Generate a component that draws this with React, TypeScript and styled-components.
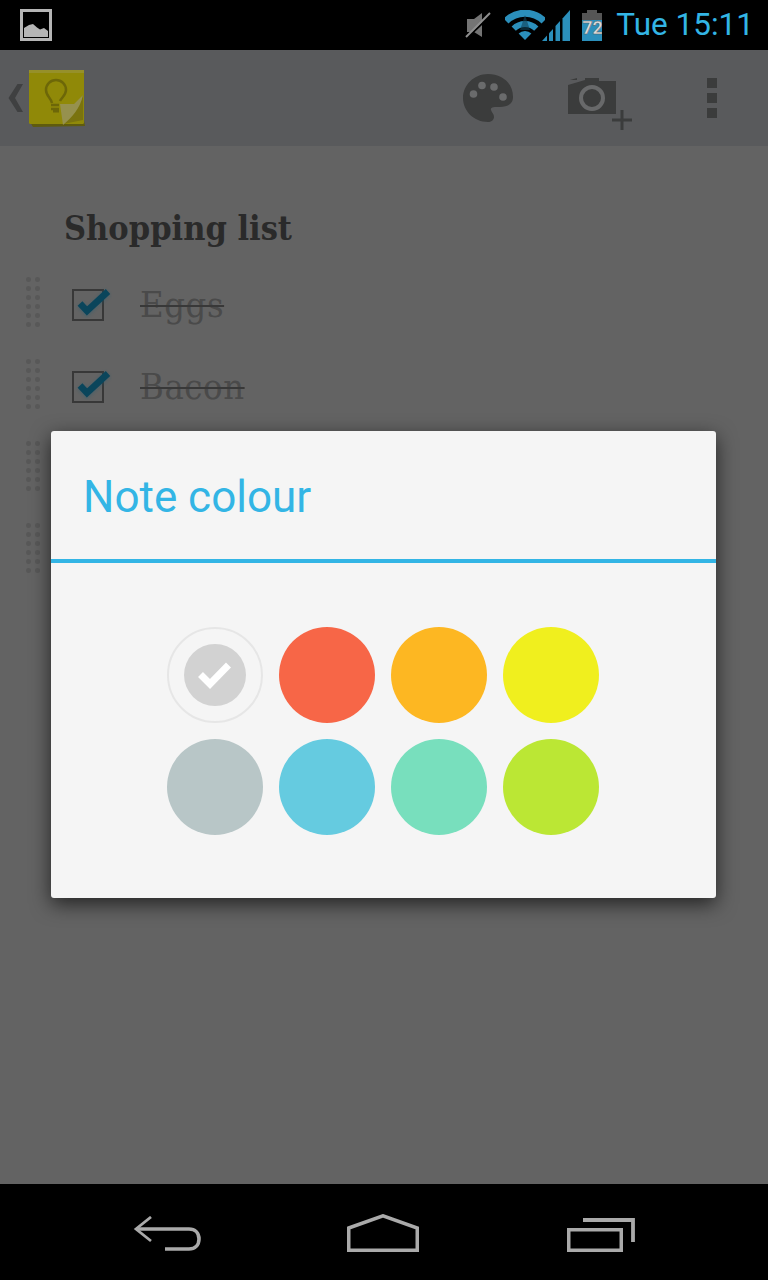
import React from "react";
import styled, { createGlobalStyle } from "styled-components";

const Global = createGlobalStyle`
  html, body { margin: 0; padding: 0; background: #636363; }
  * { box-sizing: border-box; }
`;

const Page = styled.div`
  position: relative;
  width: 768px;
  height: 1280px;
  display: flex;
  flex-direction: column;
  overflow: hidden;
  background: #636363;
  font-family: Roboto, "Liberation Sans", sans-serif;
`;

const StatusBar = styled.header`
  flex: 0 0 50px;
  display: flex;
  align-items: center;
  padding: 0 14px 0 20px;
  background: #000;
`;

const StatusIcons = styled.div`
  margin-left: auto;
  display: flex;
  align-items: center;
`;

const StatusSlot = styled.span<{ $gap: number }>`
  display: flex;
  margin-left: ${(p) => p.$gap}px;
`;

const Clock = styled.span`
  margin-left: 14px;
  font-size: 31.5px;
  line-height: 50px;
  color: #33b5e5;
`;

const ActionBar = styled.div`
  flex: 0 0 96px;
  display: flex;
  align-items: center;
  padding: 0 51px 0 8px;
  background: #595a5c;
`;

const ActionGroup = styled.div`
  margin-left: auto;
  display: flex;
  align-items: center;
`;

const ActionSlot = styled.span<{ $gap?: number }>`
  display: flex;
  margin-left: ${(p) => p.$gap ?? 0}px;
`;

const Content = styled.main`
  flex: 1;
  padding: 60px 0 0 26px;
  background: #636363;
`;

const NoteTitle = styled.h1`
  margin: 0 0 11px 38px;
  font-family: "DejaVu Serif Condensed", "DejaVu Serif", "Liberation Serif", serif;
  font-size: 34px;
  font-weight: 700;
  line-height: 44px;
  color: #2a2a2a;
`;

const Row = styled.div`
  height: 82px;
  display: flex;
  align-items: center;
`;

const Grip = styled.div`
  display: grid;
  grid-template-columns: repeat(2, 5px);
  grid-auto-rows: 5px;
  gap: 4px;
`;

const GripDot = styled.i`
  display: block;
  border-radius: 50%;
  background: #585858;
`;

const CheckSlot = styled.span`
  display: flex;
  margin: 6px 0 0 32px;
`;

const ItemText = styled.span`
  margin: 6px 0 0 28px;
  font-family: "DejaVu Serif Condensed", "DejaVu Serif", "Liberation Serif", serif;
  font-size: 36px;
  line-height: 44px;
  letter-spacing: 0.6px;
  color: #4a4a4a;
  text-decoration: line-through 2px #383838;
`;

const NavBar = styled.nav`
  flex: 0 0 96px;
  display: flex;
  align-items: flex-start;
  padding: 30px 0 0 133px;
  background: #000;
`;

const NavSlot = styled.span<{ $gap?: number; $top?: number }>`
  display: flex;
  margin-left: ${(p) => p.$gap ?? 0}px;
  margin-top: ${(p) => p.$top ?? 0}px;
`;

const Dialog = styled.section`
  position: absolute;
  left: 51px;
  top: 431px;
  width: 665px;
  height: 467px;
  border-radius: 3px;
  background: #f5f5f5;
  box-shadow: 0 6px 20px rgba(0, 0, 0, 0.65);
`;

const DialogTitle = styled.h2`
  margin: 0;
  height: 132px;
  padding: 0 32px;
  border-bottom: 4px solid #33b5e5;
  font-size: 44px;
  font-weight: 400;
  line-height: 132px;
  color: #33b5e5;
`;

const Swatches = styled.div`
  padding: 64px 1px 0 0;
  display: grid;
  grid-template-columns: repeat(4, 96px);
  grid-auto-rows: 96px;
  gap: 16px;
  justify-content: center;
`;

const Swatch = styled.div<{ $color: string }>`
  border-radius: 50%;
  background: ${(p) => p.$color};
`;

const SelectedSwatch = styled.div`
  display: flex;
  align-items: center;
  justify-content: center;
  border: 2px solid #e6e6e6;
  border-radius: 50%;
`;

const SelectedInner = styled.div`
  width: 62px;
  height: 62px;
  display: flex;
  align-items: center;
  justify-content: center;
  border-radius: 50%;
  background: #d2d2d2;
`;

const ImageIcon = () => (
  <svg width="32" height="32" viewBox="0 0 32 32">
    <rect x="1.5" y="1.5" width="29" height="29" fill="none" stroke="#b5b5b5" strokeWidth="3" />
    <path d="M4 28V19L9 16L13 15L17 18.5L20 20.5L24 19L28 22V28Z" fill="#b5b5b5" />
  </svg>
);

const MuteIcon = () => (
  <svg width="26" height="26" viewBox="0 0 26 26">
    <path d="M2 7H9L17 1V25L9 20H2Z" fill="#747474" />
    <path d="M2.5 25.5L26 3" stroke="#000" strokeWidth="2" />
    <path d="M1 25L25 1" stroke="#8f8f8f" strokeWidth="2" />
  </svg>
);

const WifiIcon = () => (
  <svg width="40" height="31" viewBox="0 0 40 31">
    <g fill="none" stroke="#2b8fbb">
      <path d="M1 11A27 27 0 0 1 39 11" strokeWidth="7" />
      <path d="M8.7 18.7A16 16 0 0 1 31.3 18.7" strokeWidth="6" />
    </g>
    <path d="M20 30L13.6 23.6A9 9 0 0 1 26.4 23.6Z" fill="#2b8fbb" />
    <path d="M20 5L25 20H15Z" fill="#0f4358" opacity="0.6" />
  </svg>
);

const SignalIcon = () => (
  <svg width="28" height="31" viewBox="0 0 28 31">
    <path d="M0 31L5 25.5V31Z" fill="#2b8fbb" />
    <path d="M7 23.3L11 18.9V31H7Z" fill="#2b8fbb" />
    <path d="M13.5 16.1L18 11.1V31H13.5Z" fill="#2b8fbb" />
    <path d="M20.5 8.4L28 0V31H20.5Z" fill="#2b8fbb" />
  </svg>
);

const BatteryIcon = () => (
  <svg width="20" height="31" viewBox="0 0 20 31">
    <rect x="5" y="0" width="10" height="3" fill="#555" />
    <rect x="0" y="3" width="20" height="7" fill="#555" />
    <rect x="0" y="10" width="20" height="21" fill="#2b8fbb" />
    <text x="10.5" y="24" textAnchor="middle" fontFamily="Roboto, sans-serif" fontWeight="700" fontSize="18" fill="#dcdcdc" stroke="#555" strokeWidth="0.4">72</text>
  </svg>
);

const Chevron = () => (
  <svg width="15" height="28" viewBox="0 0 15 28" style={{ flexShrink: 0 }}>
    <path d="M9.5 0H15L7 14L15 28H9.5L0.5 14Z" fill="#3f4041" />
  </svg>
);

const NoteIcon = () => (
  <svg width="56" height="57" viewBox="0 0 56 57" style={{ marginLeft: 6 }}>
    <path d="M1 52L55 50L56 56L4 57Z" fill="#5f5b0e" />
    <rect x="0" y="0" width="55" height="54" rx="1.5" fill="#908908" />
    <rect x="0" y="0" width="55" height="3" fill="#96902a" />
    <path d="M54 25V50L34 54Z" fill="#7a730e" />
    <path d="M31 34H45L54 25C51 39 43 47 34 55Z" fill="#96914e" />
    <g fill="none" stroke="#6d6708" strokeWidth="2.5">
      <path d="M23 33C22 28 17 26 17 20A10 10 0 0 1 37 20C37 25 33 27 31 31" />
      <path d="M22 35H30M22 39H30" />
    </g>
    <rect x="24" y="40" width="6" height="2.5" fill="#6d6708" />
  </svg>
);

const PaletteIcon = () => (
  <svg width="50" height="48" viewBox="0 0 50 48">
    <path
      d="M25 0C39 0 50 9 50 23C50 31 43 33 37 33C31 33 27 33 28 36C29 39 31 40 31 43C31 46 28 48 25 48C11 48 0 37 0 24C0 11 11 0 25 0Z"
      fill="#3b3c3c"
    />
    <g fill="#6a6b6c">
      <circle cx="10.5" cy="20" r="3.8" />
      <circle cx="19" cy="11.5" r="3.8" />
      <circle cx="31" cy="13" r="3.8" />
      <circle cx="40" cy="23" r="3.8" />
    </g>
  </svg>
);

const CameraIcon = () => (
  <svg width="64" height="64" viewBox="0 0 64 64">
    <path d="M2 14L9 12V14Z" fill="#3b3c3c" />
    <path d="M0 19L17 14V12H31V15H48V48H0Z" fill="#3b3c3c" />
    <circle cx="24" cy="32" r="11" fill="none" stroke="#68696a" strokeWidth="4" />
    <path d="M44 54H64M54 44V64" stroke="#3b3c3c" strokeWidth="3" fill="none" />
  </svg>
);

const OverflowIcon = () => (
  <svg width="10" height="40" viewBox="0 0 10 40">
    <path d="M0 0H10V10H0ZM0 15H10V25H0ZM0 30H10V40H0Z" fill="#3b3c3c" />
  </svg>
);

const CheckedBox = () => (
  <svg width="40" height="36" viewBox="0 0 40 36">
    <defs>
      <filter id="glow" x="-30%" y="-30%" width="160%" height="160%">
        <feGaussianBlur stdDeviation="1.5" />
      </filter>
    </defs>
    <rect x="1" y="3" width="30" height="30" fill="none" stroke="#383838" strokeWidth="2" />
    <path d="M8 17L15 25L36 5" fill="none" stroke="#1a5c74" strokeWidth="8" opacity="0.3" filter="url(#glow)" />
    <path d="M8 16.5L15 24L36 4.5" fill="none" stroke="#0a455b" strokeWidth="6.5" />
  </svg>
);

const BackIcon = () => (
  <svg width="72" height="36" viewBox="0 0 72 36">
    <path d="M18 1L3 13L18 25" fill="none" stroke="#aaa" strokeWidth="2.8" />
    <path d="M3 13H56C62 13 66 17 66 23C66 29 62 33 56 33H32" fill="none" stroke="#aaa" strokeWidth="3.6" />
  </svg>
);

const HomeIcon = () => (
  <svg width="72" height="40" viewBox="0 0 72 40">
    <path d="M1.75 14L36 1.8L70.25 14V36.25H1.75Z" fill="none" stroke="#aaa" strokeWidth="3.5" />
  </svg>
);

const RecentsIcon = () => (
  <svg width="68" height="36" viewBox="0 0 68 36">
    <rect x="1.75" y="11.75" width="52.5" height="20.5" fill="none" stroke="#aaa" strokeWidth="3.5" />
    <path d="M16 2H66V24" fill="none" stroke="#aaa" strokeWidth="3.8" />
  </svg>
);

const WhiteCheck = () => (
  <svg width="36" height="30" viewBox="0 0 36 30">
    <path d="M3.5 14.5L13 24L31.5 5" fill="none" stroke="#fff" strokeWidth="7" />
  </svg>
);

const GripDots = () => (
  <Grip>
    {Array.from({ length: 12 }, (_, i) => (
      <GripDot key={i} />
    ))}
  </Grip>
);

const colours = ["#f76647", "#fdb722", "#f0ef1e", "#b8c6c7", "#65cbe0", "#78dfbd", "#bbe734"];

export default function App() {
  return (
    <Page>
      <Global />
      <StatusBar>
        <ImageIcon />
        <StatusIcons>
          <MuteIcon />
          <StatusSlot $gap={14}><WifiIcon /></StatusSlot>
          <StatusSlot $gap={-3}><SignalIcon /></StatusSlot>
          <StatusSlot $gap={12}><BatteryIcon /></StatusSlot>
          <Clock>Tue 15:11</Clock>
        </StatusIcons>
      </StatusBar>
      <ActionBar>
        <Chevron />
        <NoteIcon />
        <ActionGroup>
          <ActionSlot><PaletteIcon /></ActionSlot>
          <ActionSlot $gap={55}><CameraIcon /></ActionSlot>
          <ActionSlot $gap={75}><OverflowIcon /></ActionSlot>
        </ActionGroup>
      </ActionBar>
      <Content>
        <NoteTitle>Shopping list</NoteTitle>
        <Row>
          <GripDots />
          <CheckSlot><CheckedBox /></CheckSlot>
          <ItemText>Eggs</ItemText>
        </Row>
        <Row>
          <GripDots />
          <CheckSlot><CheckedBox /></CheckSlot>
          <ItemText>Bacon</ItemText>
        </Row>
        <Row><GripDots /></Row>
        <Row><GripDots /></Row>
      </Content>
      <NavBar>
        <NavSlot $top={2}><BackIcon /></NavSlot>
        <NavSlot $gap={142}><HomeIcon /></NavSlot>
        <NavSlot $gap={148} $top={4}><RecentsIcon /></NavSlot>
      </NavBar>
      <Dialog>
        <DialogTitle>Note colour</DialogTitle>
        <Swatches>
          <SelectedSwatch>
            <SelectedInner><WhiteCheck /></SelectedInner>
          </SelectedSwatch>
          {colours.map((c) => (
            <Swatch key={c} $color={c} />
          ))}
        </Swatches>
      </Dialog>
    </Page>
  );
}
